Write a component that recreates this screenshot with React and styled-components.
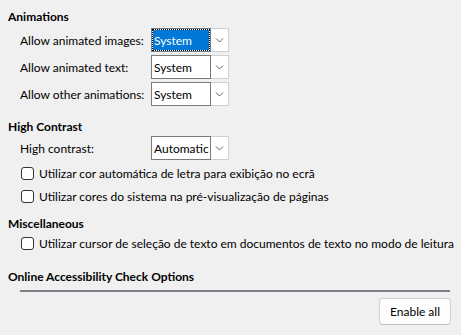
import React from 'react';
import styled, { createGlobalStyle } from 'styled-components';

const GlobalStyle = createGlobalStyle`
  body {
    margin: 0;
    background: #f0f0f0;
    font-family: Lato, 'Noto Sans', sans-serif;
    font-size: 12px;
    color: #000;
  }
`;

const Page = styled.div`
  padding: 9px 10px 0 8px;
`;

const Heading = styled.div`
  font-weight: bold;
  line-height: 16px;
  margin-top: ${(p) => p.$top || 0}px;
`;

const Rows = styled.div`
  display: grid;
  grid-template-columns: 131px 78px;
  row-gap: 3px;
  padding-left: 12px;
  margin-top: ${(p) => p.$top || 0}px;
`;

const Label = styled.div`
  display: flex;
  align-items: center;
  height: 24px;
  white-space: nowrap;
`;

const SelectBox = styled.div`
  display: flex;
  height: 24px;
  background: #fff;
`;

const SelectText = styled.div`
  flex: 1;
  display: flex;
  align-items: center;
  border: 1px solid #7a7a7a;
  padding: 1px;
  min-width: 0;
`;

const SelectValue = styled.span`
  flex: 1;
  height: 100%;
  display: flex;
  align-items: center;
  padding-left: 1px;
  white-space: nowrap;
  ${(p) =>
    p.$focused &&
    `
    background: #0078d7;
    color: #fff;
    outline: 1px dotted #000;
    outline-offset: 0;
  `}
`;

const ArrowBtn = styled.div`
  width: 17px;
  display: flex;
  align-items: center;
  justify-content: center;
  border: 1px solid #cfcfcf;
  border-left: none;
  background: #fff;
`;

const CheckRow = styled.label`
  display: flex;
  align-items: center;
  gap: 5px;
  height: 23px;
  padding-left: 13px;
  white-space: nowrap;
  margin-top: ${(p) => p.$top || 0}px;
`;

const Box = styled.span`
  width: 11px;
  height: 11px;
  border: 1px solid #333;
  border-radius: 3px;
  background: #fff;
  flex: none;
`;

const Separator = styled.div`
  height: 2px;
  background: #7f7f87;
  margin: 5px 1px 0 12px;
`;

const Footer = styled.div`
  display: flex;
  justify-content: flex-end;
  margin-top: 6px;
`;

const Button = styled.button`
  width: 72px;
  height: 27px;
  font: inherit;
  background: #fdfdfd;
  border: 1px solid #d0d0d0;
  border-bottom-color: #bdbdbd;
  border-radius: 4px;
  color: #000;
  padding: 0;
`;

function Chevron() {
  return (
    <svg width="9" height="6" viewBox="0 0 9 6">
      <path d="M1 1.5 L4.5 5 L8 1.5" fill="none" stroke="#606060" strokeWidth="1" />
    </svg>
  );
}

function Select({ value, focused }) {
  return (
    <SelectBox>
      <SelectText>
        <SelectValue $focused={focused}>{value}</SelectValue>
      </SelectText>
      <ArrowBtn>
        <Chevron />
      </ArrowBtn>
    </SelectBox>
  );
}

function Check({ children, top }) {
  return (
    <CheckRow $top={top}>
      <Box />
      {children}
    </CheckRow>
  );
}

export default function App() {
  return (
    <>
      <GlobalStyle />
      <Page>
        <Heading>Animations</Heading>
        <Rows $top={3}>
          <Label>Allow animated images:</Label>
          <Select value="System" focused />
          <Label>Allow animated text:</Label>
          <Select value="System" />
          <Label>Allow other animations:</Label>
          <Select value="System" />
        </Rows>

        <Heading $top={13}>High Contrast</Heading>
        <Rows $top={1}>
          <Label>High contrast:</Label>
          <Select value="Automatic" />
        </Rows>
        <Check top={2}>Utilizar cor automática de letra para exibição no ecrã</Check>
        <Check>Utilizar cores do sistema na pré-visualização de páginas</Check>

        <Heading $top={8}>Miscellaneous</Heading>
        <Check>Utilizar cursor de seleção de texto em documentos de texto no modo de leitura</Check>

        <Heading $top={14}>Online Accessibility Check Options</Heading>
        <Separator />
        <Footer>
          <Button>Enable all</Button>
        </Footer>
      </Page>
    </>
  );
}
